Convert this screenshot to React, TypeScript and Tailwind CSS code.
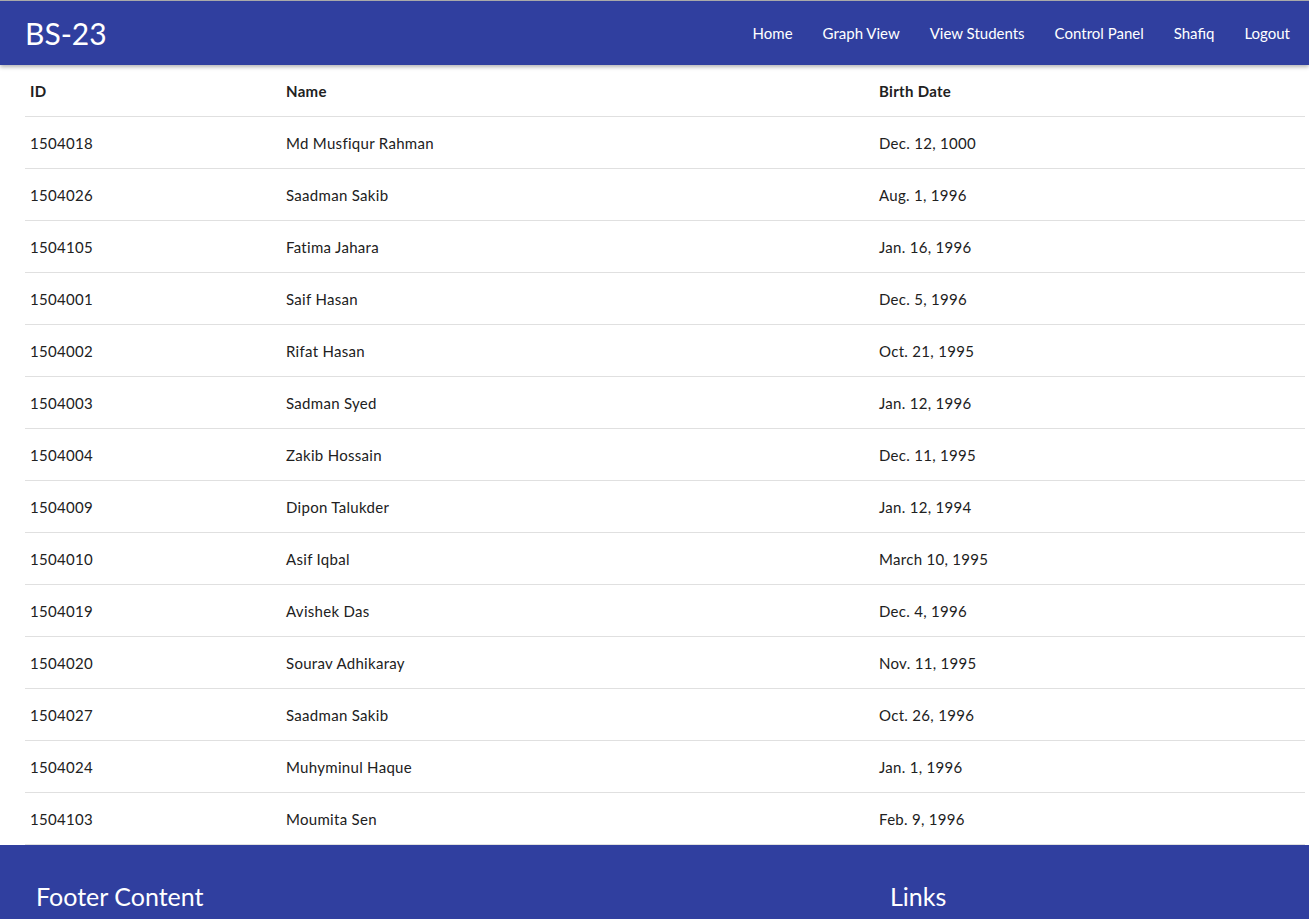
const students = [
  { id: '1504018', name: 'Md Musfiqur Rahman', birth: 'Dec. 12, 1000' },
  { id: '1504026', name: 'Saadman Sakib', birth: 'Aug. 1, 1996' },
  { id: '1504105', name: 'Fatima Jahara', birth: 'Jan. 16, 1996' },
  { id: '1504001', name: 'Saif Hasan', birth: 'Dec. 5, 1996' },
  { id: '1504002', name: 'Rifat Hasan', birth: 'Oct. 21, 1995' },
  { id: '1504003', name: 'Sadman Syed', birth: 'Jan. 12, 1996' },
  { id: '1504004', name: 'Zakib Hossain', birth: 'Dec. 11, 1995' },
  { id: '1504009', name: 'Dipon Talukder', birth: 'Jan. 12, 1994' },
  { id: '1504010', name: 'Asif Iqbal', birth: 'March 10, 1995' },
  { id: '1504019', name: 'Avishek Das', birth: 'Dec. 4, 1996' },
  { id: '1504020', name: 'Sourav Adhikaray', birth: 'Nov. 11, 1995' },
  { id: '1504027', name: 'Saadman Sakib', birth: 'Oct. 26, 1996' },
  { id: '1504024', name: 'Muhyminul Haque', birth: 'Jan. 1, 1996' },
  { id: '1504103', name: 'Moumita Sen', birth: 'Feb. 9, 1996' },
];

const links = ['Home', 'Graph View', 'View Students', 'Control Panel', 'Shafiq', 'Logout'];

export default function App() {
  return (
    <div className="min-h-screen bg-white text-[#212121] font-['Lato','Open_Sans',sans-serif]">
      <nav className="relative z-10 h-[65px] border-t border-[#a9a9a9] bg-[#303f9f] text-white shadow-[0_2px_4px_rgba(0,0,0,0.3)] flex items-center justify-between pl-[25px] pr-[4px]">
        <a className="text-[30px] leading-none -mt-[1px]">BS-23</a>
        <ul className="flex">
          {links.map((l) => (
            <li key={l}>
              <a className="block px-[15px] text-[15px] leading-[64px]">{l}</a>
            </li>
          ))}
        </ul>
      </nav>

      <div className="pl-[25px] pr-[4px]">
        <table className="w-full table-fixed border-collapse text-[15px] tracking-[0.3px]">
          <colgroup>
            <col className="w-[256px]" />
            <col className="w-[593px]" />
            <col />
          </colgroup>
          <thead>
            <tr className="border-b border-[#e0e0e0] h-[51px]">
              <th className="text-left font-bold px-[5px] pt-[1px]">ID</th>
              <th className="text-left font-bold px-[5px] pt-[1px]">Name</th>
              <th className="text-left font-bold px-[5px] pt-[1px]">Birth Date</th>
            </tr>
          </thead>
          <tbody>
            {students.map((s, i) => (
              <tr key={i} className="border-b border-[#e0e0e0] h-[52px]">
                <td className="px-[5px] pt-[2px]">{s.id}</td>
                <td className="px-[5px] pt-[2px]">{s.name}</td>
                <td className="px-[5px] pt-[2px]">{s.birth}</td>
              </tr>
            ))}
          </tbody>
        </table>
      </div>

      <footer className="bg-[#303f9f] text-white pt-[35px] pb-[40px]">
        <div className="grid grid-cols-[854px_1fr] pl-[36px]">
          <h5 className="text-[25px] leading-[32px]">Footer Content</h5>
          <h5 className="text-[25px] leading-[32px]">Links</h5>
        </div>
      </footer>
    </div>
  );
}
